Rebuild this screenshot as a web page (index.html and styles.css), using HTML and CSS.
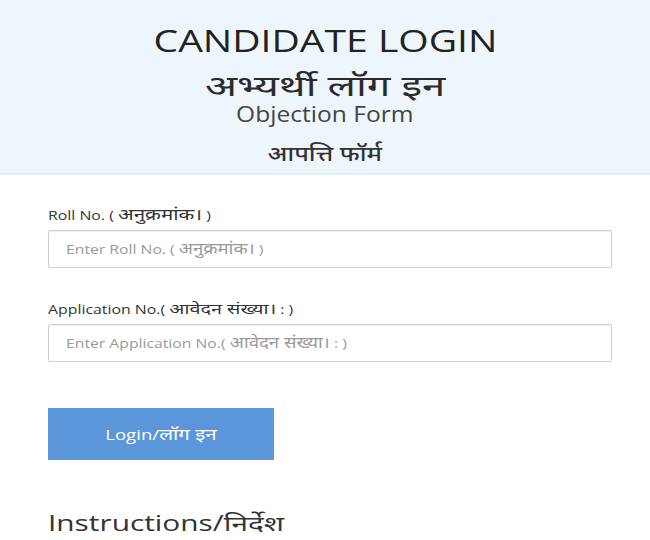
FILE: index.html
```html
<!DOCTYPE html>
<html lang="hi">
<head>
<meta charset="utf-8">
<title>Candidate Login</title>
<link rel="stylesheet" href="styles.css">
</head>
<body>
<header class="hero">
  <h1 class="hero-title"><span class="wide wide-title">CANDIDATE LOGIN</span></h1>
  <div class="hero-hindi"><span class="wide wide-hindi">अभ्यर्थी लॉग इन</span></div>
  <div class="hero-sub"><span class="wide wide-sub">Objection Form</span></div>
  <div class="hero-sub-hindi"><span class="wide wide-subhindi">आपत्ति फॉर्म</span></div>
</header>
<main class="content">
  <form class="login-form">
    <div class="field">
      <label class="field-label" for="roll"><span class="wide wide-left wide-label">Roll No. ( <span class="dv dv-label">अनुक्रमांक।</span> )</span></label>
      <div class="field-input" id="roll"><span class="wide wide-left wide-ph">Enter Roll No. ( <span class="dv dv-ph">अनुक्रमांक।</span> )</span></div>
    </div>
    <div class="field">
      <label class="field-label" for="app"><span class="wide wide-left wide-label">Application No.( <span class="dv dv-label2">आवेदन संख्या।</span> : )</span></label>
      <div class="field-input" id="app"><span class="wide wide-left wide-ph">Enter Application No.( <span class="dv dv-ph">आवेदन संख्या।</span> : )</span></div>
    </div>
    <button class="btn-login" type="button"><span class="wide wide-btn">Login/<span class="dv dv-btn">लॉग इन</span></span></button>
  </form>
  <h2 class="instructions"><span class="wide wide-left wide-inst">Instructions/निर्देश</span></h2>
</main>
</body>
</html>
```
FILE: styles.css
```css
html, body {
  margin: 0;
  padding: 0;
  background: #ffffff;
}
body {
  font-family: "Open Sans", "Noto Sans", "Noto Sans Devanagari", "Lohit Devanagari", sans-serif;
  color: #333333;
}
.wide {
  display: inline-block;
  white-space: nowrap;
  transform-origin: center center;
}
.wide-left {
  transform-origin: left center;
}
.wide-title { transform: scaleX(1.26); }
.wide-hindi { transform: scaleX(1.5); }
.wide-sub { transform: scaleX(1.17); }
.wide-subhindi { transform: scaleX(1.2); }
.wide-label { transform: scaleX(1.32); }
.wide-ph { transform: scaleX(1.21); }
.wide-btn { transform: scaleX(1.24); }
.wide-inst { transform: scaleX(1.42); }

.dv {
  line-height: 0;
}
.dv-label { font-size: 1.3em; }
.dv-label2 { font-size: 1.25em; }
.dv-ph { font-size: 1.18em; }
.dv-btn { font-size: 1.1em; }

.hero {
  background: #eef6fc;
  border-bottom: 2px solid #e2edf4;
  box-sizing: border-box;
  height: 175px;
  padding-top: 22px;
  text-align: center;
}
.hero-title {
  margin: 0;
  font-size: 31px;
  line-height: 36px;
  font-weight: 400;
  color: #222222;
}
.hero-hindi {
  padding-top: 10px;
  font-size: 28px;
  line-height: 34px;
  color: #2b2b2b;
}
.hero-sub {
  font-size: 21px;
  line-height: 24px;
  color: #444444;
}
.hero-sub-hindi {
  margin-top: 12px;
  font-size: 21px;
  line-height: 30px;
  font-weight: 500;
  color: #333333;
}
.content {
  padding: 32px 38px 0 48px;
}
.login-form {
  display: flex;
  flex-direction: column;
  align-items: stretch;
}
.field {
  display: flex;
  flex-direction: column;
  gap: 5px;
  margin-bottom: 33px;
}
.field-label {
  font-size: 12px;
  line-height: 18px;
  height: 18px;
  color: #333333;
}
.field-input {
  display: flex;
  align-items: center;
  height: 38px;
  box-sizing: border-box;
  border: 1px solid #cfcfcf;
  border-radius: 2px;
  box-shadow: inset 0 1px 1px rgba(0,0,0,0.06);
  padding: 0 17px;
  font-size: 13px;
  line-height: 18px;
  color: #9a9a9a;
  background: #ffffff;
}
.btn-login {
  align-self: flex-start;
  margin-top: 13px;
  width: 226px;
  height: 52px;
  border: none;
  border-radius: 0;
  background: #5a96d9;
  color: #ffffff;
  font-family: inherit;
  font-size: 15px;
  line-height: 20px;
  cursor: pointer;
}
.instructions {
  margin: 49px 0 0 0;
  font-size: 21px;
  line-height: 28px;
  font-weight: 400;
  color: #333333;
}
```
